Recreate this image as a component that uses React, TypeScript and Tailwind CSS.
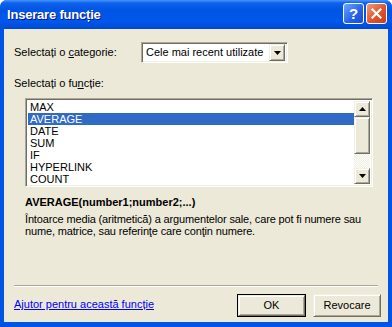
const raised =
  "border border-t-[#f1efe2] border-l-[#f1efe2] border-r-[#716f64] border-b-[#716f64] shadow-[inset_1px_1px_#fff,inset_-1px_-1px_#aca899] bg-[#ece9d8]";
const sunken =
  "border border-t-[#aca899] border-l-[#aca899] border-r-white border-b-white shadow-[inset_1px_1px_#716f64,inset_-1px_-1px_#f1efe2]";

function Arrow({ up = false }: { up?: boolean }) {
  return (
    <svg width="7" height="4" viewBox="0 0 7 4">
      <path d={up ? "M0 4 L3.5 0 L7 4 Z" : "M0 0 L7 0 L3.5 4 Z"} fill="#000" />
    </svg>
  );
}

const functions = ["MAX", "AVERAGE", "DATE", "SUM", "IF", "HYPERLINK", "COUNT"];

export default function App() {
  return (
    <div className="w-[392px] h-[327px] flex flex-col bg-[#0054e3] rounded-t-[7px] overflow-hidden font-['Liberation_Sans',Arial,sans-serif] text-[11px] text-black">
      {/* title bar */}
      <div className="h-[29px] shrink-0 flex items-center pl-[7px] pr-[5px] bg-[linear-gradient(to_bottom,#4a97fb_0%,#0f62ec_10%,#0054e3_35%,#0057ec_75%,#0049d0_100%)]">
        <div className="text-white font-bold text-[13px] [text-shadow:1px_1px_#0a1883] tracking-[-0.2px]">
          Inserare funcție
        </div>
        <div className="ml-auto flex gap-[2px] mb-[2px]">
          <div className="w-[21px] h-[21px] rounded-[3px] border border-white flex items-center justify-center bg-[linear-gradient(135deg,#6ea6ff,#2461e8_60%,#1a4fd6)] text-white font-bold text-[15px] leading-none">
            ?
          </div>
          <div className="w-[21px] h-[21px] rounded-[3px] border border-white flex items-center justify-center bg-[linear-gradient(135deg,#f29a7a,#e0542d_55%,#c93f18)]">
            <svg width="11" height="11" viewBox="0 0 11 11">
              <path d="M1.5 1.5 L9.5 9.5 M9.5 1.5 L1.5 9.5" stroke="#fff" strokeWidth="2.2" strokeLinecap="square" />
            </svg>
          </div>
        </div>
      </div>

      {/* client */}
      <div className="flex-1 mx-[4px] mb-[5px] bg-[#ece9d8] flex flex-col pl-[10px] pr-[7px]">
        <div className="mt-[13px] h-[21px] flex items-center">
          <div className="w-[127px]">
            Selectați o <span className="underline">c</span>ategorie:
          </div>
          <div className={`w-[147px] h-[21px] bg-white flex items-center pl-[3px] pr-[2px] ${sunken}`}>
            <span className="pl-[1px]">Cele mai recent utilizate</span>
            <div className={`ml-auto w-[16px] h-[17px] flex items-center justify-center ${raised}`}>
              <Arrow />
            </div>
          </div>
        </div>

        <div className="mt-[14px] h-[13px] leading-[13px]">
          Selectați o fu<span className="underline">n</span>cție:
        </div>

        <div className={`mt-[8px] ml-[11px] w-[348px] h-[89px] bg-white flex p-[2px] ${sunken}`}>
          <div className="flex-1 flex flex-col overflow-hidden">
            {functions.map((f, i) => (
              <div
                key={f}
                className={`h-[12px] shrink-0 leading-[12px] pl-[2px] ${
                  i === 1 ? "bg-[#316ac5] text-white" : ""
                }`}
              >
                {f}
              </div>
            ))}
          </div>
          <div className="w-[16px] flex flex-col bg-[repeating-conic-gradient(#fdfdfb_0%_25%,#f0eee3_0%_50%)] bg-[length:2px_2px]">
            <div className={`h-[16px] flex items-center justify-center ${raised}`}>
              <Arrow up />
            </div>
            <div className={`h-[37px] ${raised}`} />
            <div className="flex-1" />
            <div className={`h-[16px] flex items-center justify-center ${raised}`}>
              <Arrow />
            </div>
          </div>
        </div>

        <div className="mt-[9px] ml-[11px] h-[13px] leading-[13px] font-bold">
          AVERAGE(number1;number2;...)
        </div>
        <div className="mt-[4px] ml-[11px] leading-[12px] whitespace-nowrap tracking-[-0.15px]">
          Întoarce media (aritmetică) a argumentelor sale, care pot fi numere sau
          <br />
          nume, matrice, sau referinţe care conţin numere.
        </div>

        <div className="mt-auto w-[364px] h-[2px] border-t border-t-[#aca899] border-b border-b-white" />

        <div className="mt-[7px] mb-[5px] flex items-start">
          <div className="mt-[2px] text-[#0000ff] underline">Ajutor pentru această funcție</div>
          <div className="ml-auto flex gap-[7px]">
            <div className="w-[69px] h-[23px] border border-black p-0">
              <div className={`w-full h-full flex items-center justify-center ${raised}`}>OK</div>
            </div>
            <div className={`w-[68px] h-[23px] flex items-center justify-center ${raised}`}>Revocare</div>
          </div>
        </div>
      </div>
    </div>
  );
}
